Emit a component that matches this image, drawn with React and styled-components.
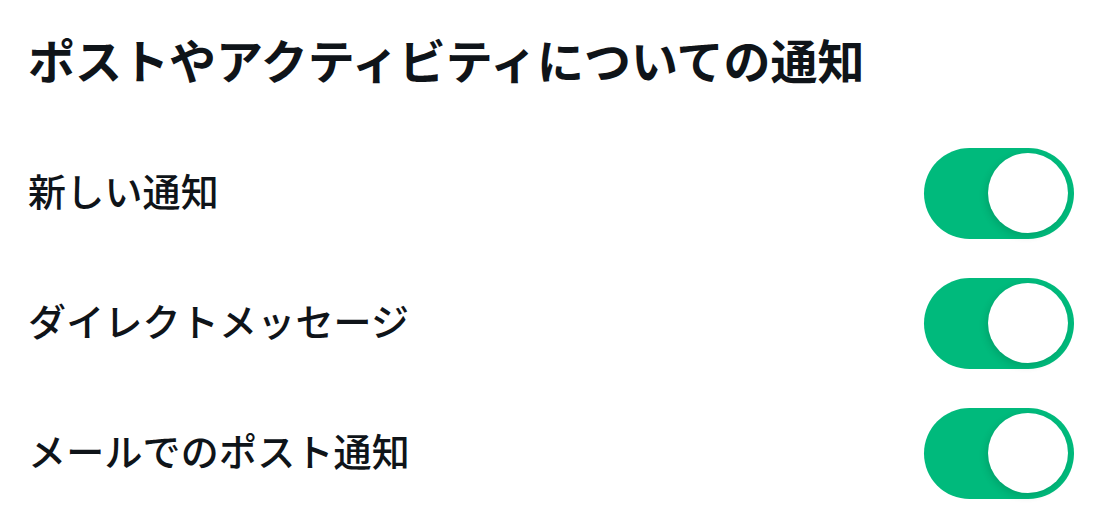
import React, { useState } from "react";
import styled, { createGlobalStyle } from "styled-components";

const GlobalStyle = createGlobalStyle`
  html, body {
    margin: 0;
    padding: 0;
    background: #ffffff;
  }
  body {
    font-family: "Noto Sans CJK JP", "Noto Sans", sans-serif;
    color: #0f1419;
  }
`;

const settings = [
  { id: "new", label: "新しい通知" },
  { id: "dm", label: "ダイレクトメッセージ" },
  { id: "mail", label: "メールでのポスト通知" },
];

function App() {
  const [values, setValues] = useState({ new: true, dm: true, mail: true });

  const onToggle = (id) => {
    setValues((prev) => ({ ...prev, [id]: !prev[id] }));
  };

  return (
    <>
      <GlobalStyle />
      <StPage>
        <StTitle>ポストやアクティビティについての通知</StTitle>
        {settings.map((item) => (
          <StRow key={item.id}>
            <StLabel>{item.label}</StLabel>
            <StSwitch
              type="button"
              role="switch"
              aria-checked={values[item.id]}
              $on={values[item.id]}
              onClick={() => onToggle(item.id)}
            >
              <StKnob $on={values[item.id]} />
            </StSwitch>
          </StRow>
        ))}
      </StPage>
    </>
  );
}

export default App;

const StPage = styled.div`
  width: 1100px;
  height: 520px;
  box-sizing: border-box;
  padding: 0 26px 0 28px;
  display: flex;
  flex-direction: column;
`;

const StTitle = styled.h1`
  margin: 0;
  height: 128px;
  box-sizing: border-box;
  padding-bottom: 12px;
  display: flex;
  align-items: center;
  font-size: 47px;
  font-weight: 700;
  line-height: 1;
`;

const StRow = styled.div`
  height: 130px;
  display: flex;
  align-items: center;
  justify-content: space-between;
`;

const StLabel = styled.span`
  font-size: 38px;
  font-weight: 500;
  line-height: 1;
  padding-bottom: 6px;
  letter-spacing: 0.2px;
`;

const StSwitch = styled.button`
  width: 150px;
  height: 91px;
  padding: 0 6px;
  border: none;
  border-radius: 46px;
  background: ${(props) => (props.$on ? "#00ba7c" : "#cfd9de")};
  display: flex;
  align-items: center;
  justify-content: ${(props) => (props.$on ? "flex-end" : "flex-start")};
  cursor: pointer;
  box-sizing: border-box;
`;

const StKnob = styled.span`
  width: 80px;
  height: 80px;
  border-radius: 50%;
  background: #ffffff;
  box-shadow: -2px 3px 7px rgba(0, 60, 40, 0.18);
`;
